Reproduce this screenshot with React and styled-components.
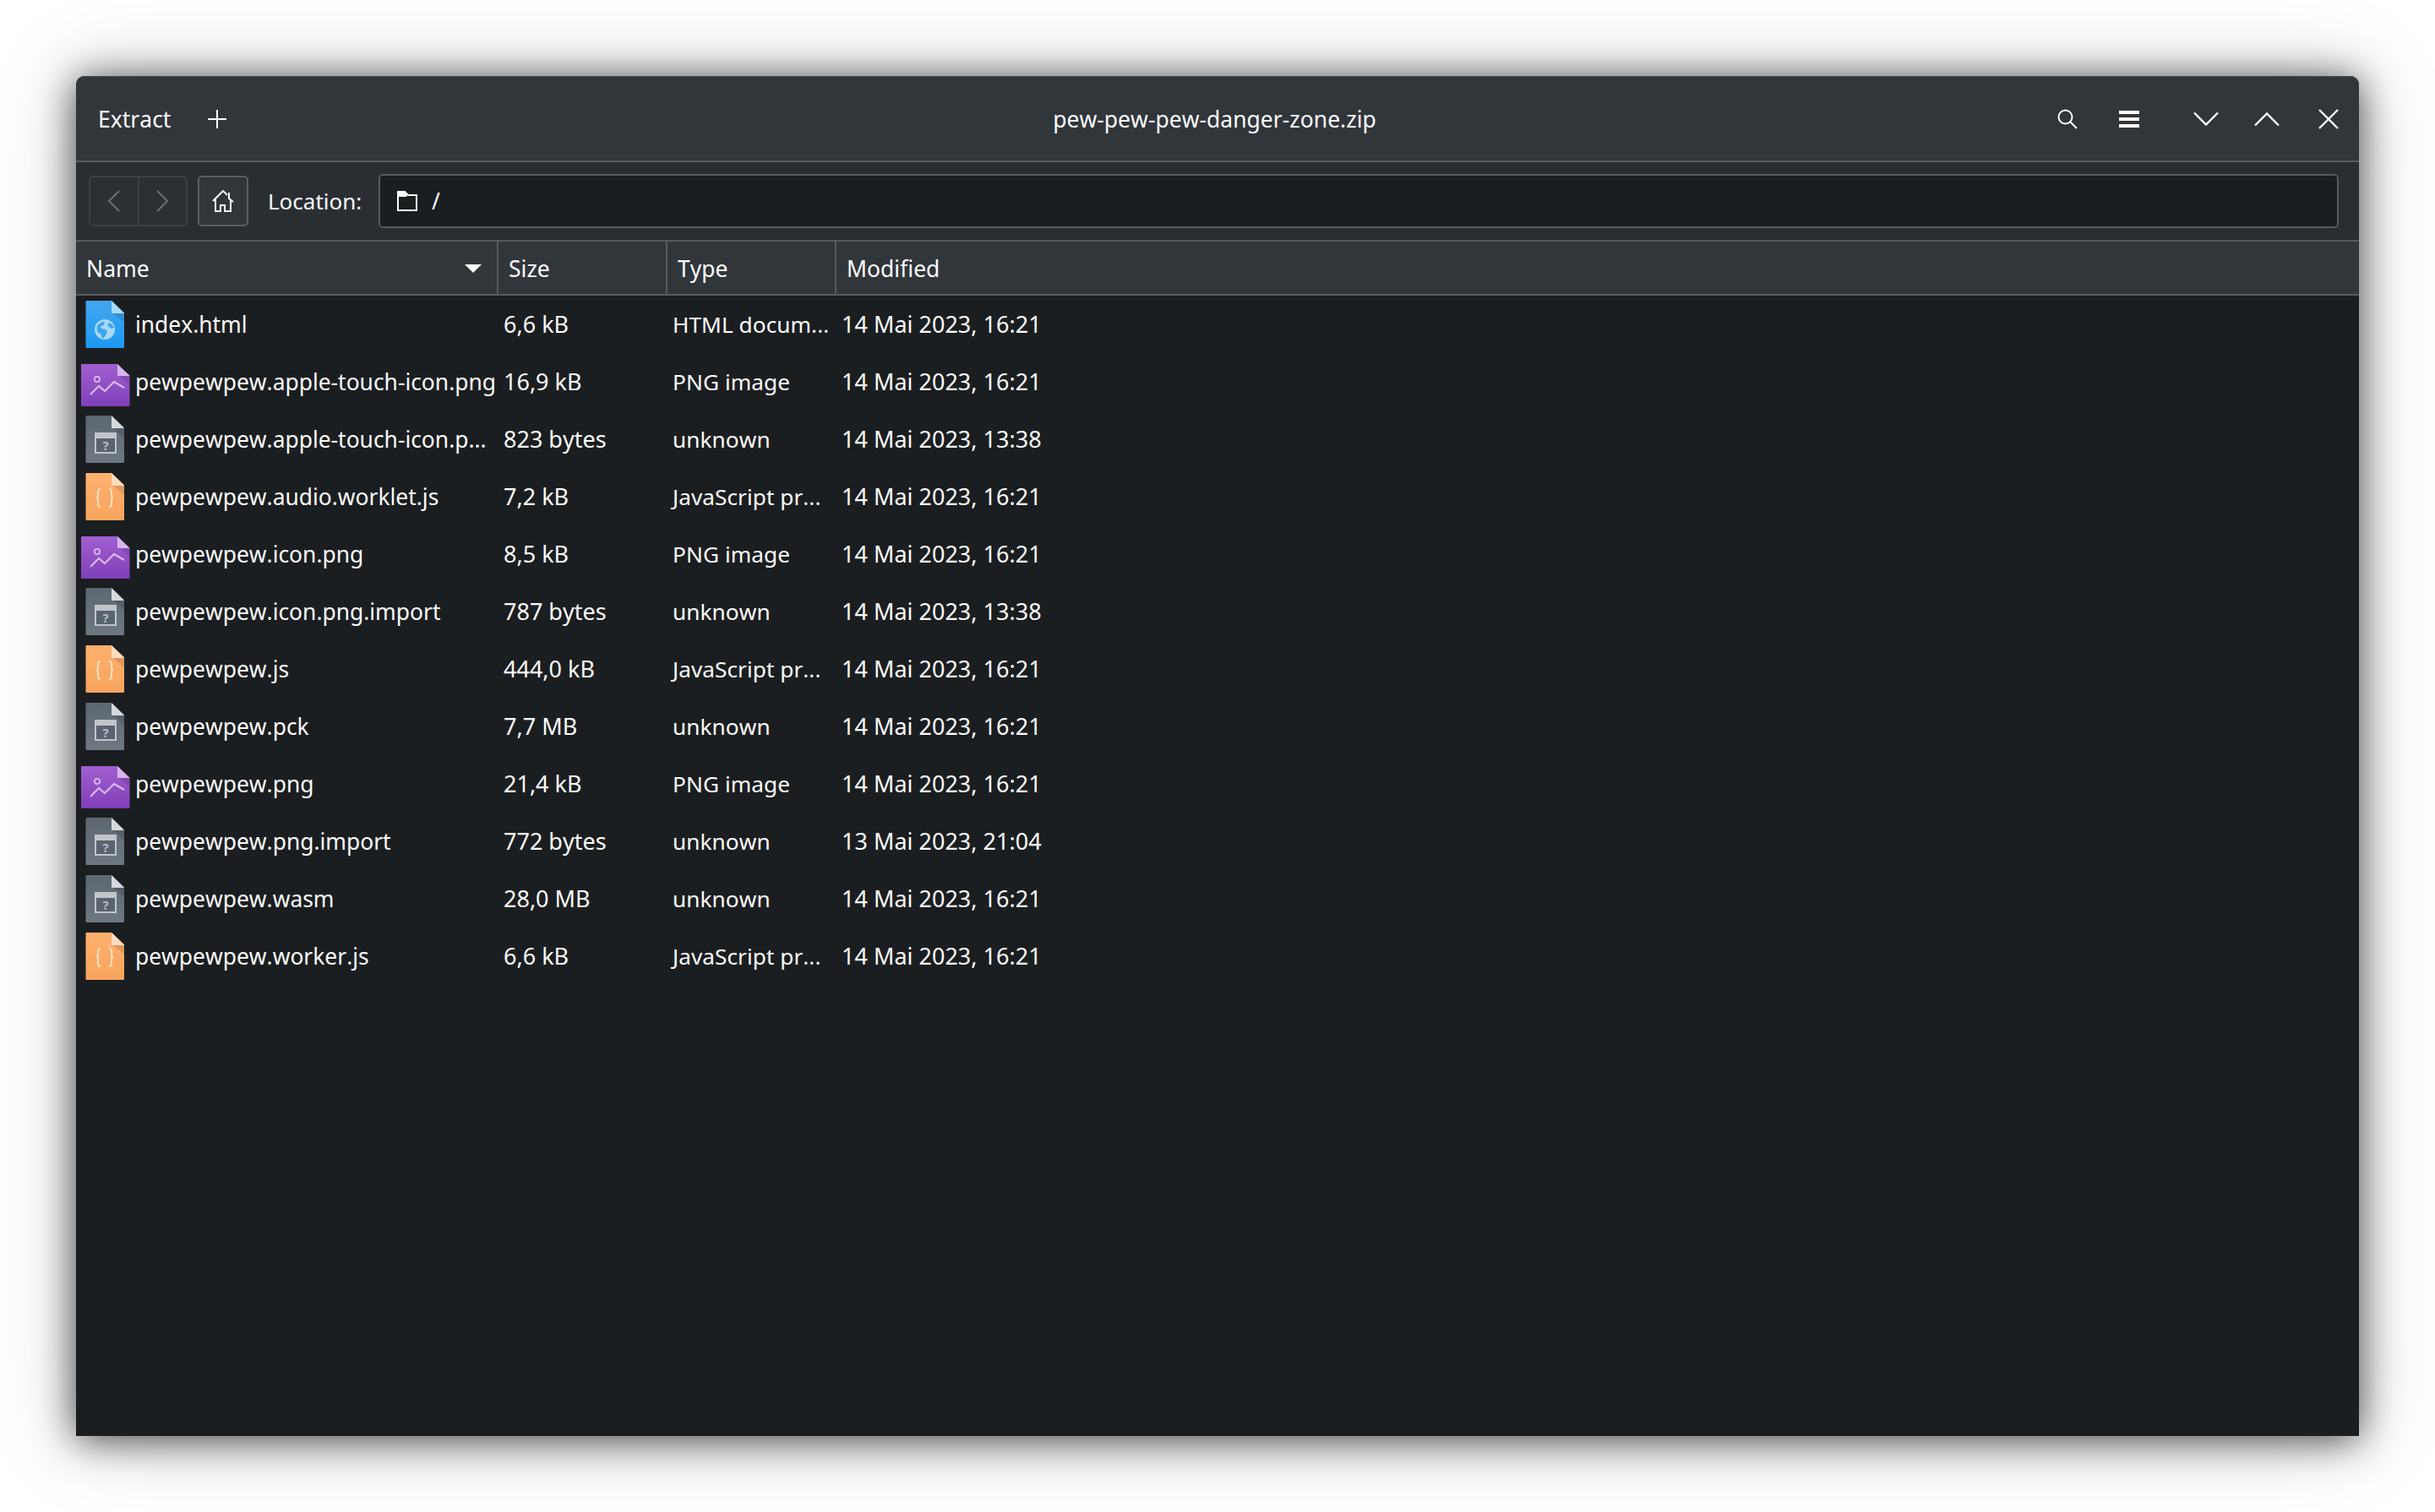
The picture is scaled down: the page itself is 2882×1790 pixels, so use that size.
import React from "react";
import styled, { createGlobalStyle } from "styled-components";

const Global = createGlobalStyle`
  html, body { margin: 0; padding: 0; background: #fff; }
  body { font-family: "Noto Sans", sans-serif; color: #fcfcfc; }
`;

const Page = styled.div`
  width: 2882px;
  height: 1790px;
  padding: 90px;
  box-sizing: border-box;
  overflow: hidden;
`;
const Win = styled.div`
  width: 2702px;
  height: 1610px;
  display: flex;
  flex-direction: column;
  background: #1b1e20;
  border-radius: 10px 10px 0 0;
  box-shadow: 0 4px 48px 0 rgba(0,0,0,.72), 0 0 110px 6px rgba(0,0,0,.13);
  font-size: 26.5px;
  line-height: 36px;
  font-kerning: none;
`;
const TitleBar = styled.header`
  height: 102px;
  flex: none;
  display: flex;
  align-items: center;
  padding: 0 23px 0 26px;
  background: #31363b;
  border-top: 1px solid #454a50;
  border-bottom: 2px solid #565a5e;
  border-radius: 10px 10px 0 0;
  box-sizing: border-box;
`;
const TitleLeft = styled.div`
  flex: 1;
  display: flex;
  align-items: center;
  gap: 43px;
  span { padding-top: 1px; }
`;
const Title = styled.div`
  flex: none;
  text-align: center;
  margin-right: 10px;
  padding-top: 1px;
`;
const TitleRight = styled.div`
  flex: 1;
  display: flex;
  justify-content: flex-end;
  align-items: center;
`;
const Glyph = styled.span`
  display: inline-flex;
  width: ${p => p.$w || 24}px;
  margin-left: ${p => p.$ml || 0}px;
  justify-content: center;
  align-items: center;
`;
const Toolbar = styled.div`
  height: 94px;
  flex: none;
  display: flex;
  align-items: center;
  padding: 0 24px 0 15px;
  background: #2a2e32;
  border-bottom: 2px solid #565a5e;
  box-sizing: border-box;
`;
const NavGroup = styled.div`
  display: flex;
  width: 117px;
  height: 60px;
  border: 2px solid #3d4145;
  border-radius: 5px;
  box-sizing: border-box;
  background: #2c3034;
`;
const NavBtn = styled.div`
  flex: 1;
  display: flex;
  align-items: center;
  justify-content: center;
  & + & { border-left: 2px solid #3d4145; }
`;
const HomeBtn = styled.div`
  margin-left: 12px;
  width: 60px;
  height: 60px;
  display: flex;
  align-items: center;
  justify-content: center;
  border: 2px solid #5a5e62;
  border-radius: 5px;
  box-sizing: border-box;
  background: #31363b;
`;
const LocLabel = styled.div`
  margin-left: 23px;
  width: 131px;
  font-size: 26px;
`;
const LocField = styled.div`
  flex: 1;
  height: 64px;
  display: flex;
  align-items: center;
  gap: 17px;
  padding: 0 20px;
  background: #1b1e20;
  border: 2px solid #565a5e;
  border-radius: 5px;
  box-sizing: border-box;
`;
const HeadRow = styled.div`
  height: 64px;
  flex: none;
  display: grid;
  grid-template-columns: 500px 200px 200px 1fr;
  background: #31363b;
  border-bottom: 2px solid #565a5e;
  box-sizing: border-box;
`;
const HeadCell = styled.div`
  display: flex;
  align-items: center;
  justify-content: space-between;
  padding: 1px 18px 0 12px;
  border-right: ${p => (p.$last ? "none" : "2px solid #565a5e")};
  box-sizing: border-box;
`;
const Rows = styled.div`
  flex: 1;
  padding-top: 1px;
`;
const Row = styled.div`
  height: 68px;
  display: grid;
  grid-template-columns: 500px 200px 200px 1fr;
  align-items: center;
`;
const NameCell = styled.div`
  display: flex;
  align-items: center;
  padding-left: 2px;
  gap: 4px;
  white-space: nowrap;
  font-size: 26.4px;
  svg { flex: none; }
  span { margin-top: -2px; }
`;
const Cell = styled.div`
  padding: 0 0 2px 6px;
  white-space: nowrap;
  font-size: ${p => p.$size || 27}px;
`;

const Plus = () => (
  <svg width="24" height="24" viewBox="0 0 24 24"><path d="M12 1v22M1 12h22" stroke="#fcfcfc" strokeWidth="2" fill="none" /></svg>
);
const Search = () => (
  <svg width="24" height="24" viewBox="0 0 24 24" fill="none" stroke="#fcfcfc" strokeWidth="2"><circle cx="9.500" cy="9.500" r="8" /><path d="M15 15l8 8" /></svg>
);
const Burger = () => (
  <svg width="24" height="20" viewBox="0 0 24 20" fill="#fcfcfc"><rect width="24" height="4" /><rect y="8" width="24" height="4" /><rect y="16" width="24" height="4" /></svg>
);
const Chevron = ({ up }) => (
  <svg width="30" height="18" viewBox="0 0 30 18" fill="none" stroke="#fcfcfc" strokeWidth="2.4">
    <path d={up ? "M1 16.500L15 2.500l14 14" : "M1 1.500L15 15.500 29 1.500"} />
  </svg>
);
const Close = () => (
  <svg width="26" height="26" viewBox="0 0 26 26" fill="none" stroke="#fcfcfc" strokeWidth="2.4"><path d="M2 2l22 22M24 2L2 24" /></svg>
);
const Nav = ({ right }) => (
  <svg width="16" height="26" viewBox="0 0 16 26" fill="none" stroke="#6b6f73" strokeWidth="2"><path d={right ? "M2 1l12 12L2 25" : "M14 1L2 13l12 12"} /></svg>
);
const Home = () => (
  <svg width="26" height="26" viewBox="0 0 26 26" fill="none" stroke="#fcfcfc" strokeWidth="2">
    <path d="M1 13L13 1l5 5M20 3v7l5 4M4 11v14h6v-7h5v7h7V11" />
  </svg>
);
const Folder = () => (
  <svg width="24" height="24" viewBox="0 0 24 24" fill="none" stroke="#fcfcfc" strokeWidth="2">
    <path d="M1 1h8l4 4h10v18H1z" />
    <path d="M1 1h7l4 4-1 2H1z" fill="#fcfcfc" stroke="none" />
  </svg>
);
const Sort = () => (
  <svg width="20" height="10" viewBox="0 0 20 10" fill="#fcfcfc"><path d="M0 0h20L10 10z" /></svg>
);

const Doc = ({ from, to, fold, id }) => (
  <>
    <defs>
      <linearGradient id={id} x1="0" y1="0" x2="0" y2="1">
        <stop offset="0" stopColor={from} /><stop offset="1" stopColor={to} />
      </linearGradient>
    </defs>
    <path d="M9.500 4a1 1 0 0 1 1-1H40l15 14v41a1 1 0 0 1-1 1H10.500a1 1 0 0 1-1-1z" fill={`url(#${id})`} />
    <path d="M40 3l15 15H41a1 1 0 0 1-1-1z" fill={fold} />
    <path d="M42 18l13 11V18z" fill="#000" opacity=".12" />
  </>
);

const HtmlIcon = () => (
  <svg width="64" height="64" viewBox="0 0 64 64">
    <Doc id="gh" from="#42a6ee" to="#1d99f3" fold="#a9d9f9" />
    <circle cx="32" cy="37" r="12" fill="#a9d8f9" />
    <path d="M23 33c2-3 5-5 9-5l-1 4-4 1 1 3 5 1 2 3-2 4-3 4c-2-2-2-4-3-6l-4-2zM37 29c2 1 5 3 6 6l-3 1-3-2-2-3z" fill="#3aa5f0" />
  </svg>
);
const ImageIcon = () => (
  <svg width="64" height="64" viewBox="0 0 64 64">
    <defs>
      <linearGradient id="gi" x1="0" y1="0" x2="0" y2="1"><stop offset="0" stopColor="#a15fd0" /><stop offset="1" stopColor="#7f3fb8" /></linearGradient>
    </defs>
    <path d="M4 11a1 1 0 0 1 1-1h42l14.500 13.500V59a1 1 0 0 1-1 1H5a1 1 0 0 1-1-1z" fill="url(#gi)" />
    <path d="M47 10l14.500 14H48a1 1 0 0 1-1-1z" fill="#d7b6ea" />
    <path d="M49 24l12.500 10V24z" fill="#000" opacity=".12" />
    <circle cx="23" cy="28" r="3.200" fill="none" stroke="#d9b8ec" strokeWidth="1.800" />
    <path d="M15 46l10-10 7 6 11-11 12 7" fill="none" stroke="#d9b8ec" strokeWidth="2.200" />
  </svg>
);
const UnknownIcon = () => (
  <svg width="64" height="64" viewBox="0 0 64 64">
    <Doc id="gu" from="#5d6772" to="#6e7882" fold="#d6d9dc" />
    <rect x="21" y="24" width="24" height="23" fill="#5a6470" stroke="#c1c5c9" strokeWidth="2" />
    <rect x="20" y="23" width="26" height="7" fill="#c1c5c9" />
    <text x="33" y="44" fontSize="15" fontWeight="700" textAnchor="middle" fill="#b8bcc1" fontFamily="Noto Sans">?</text>
  </svg>
);
const JsIcon = () => (
  <svg width="64" height="64" viewBox="0 0 64 64">
    <Doc id="gj" from="#fdb06e" to="#f9a55e" fold="#fedcc0" />
    <path d="M27 22c-2 0-3 1-3 3v4c0 2-1 3-2 3 1 0 2 1 2 3v5c0 2 1 3 3 3M37 22c2 0 3 1 3 3v4c0 2 1 3 2 3-1 0-2 1-2 3v5c0 2-1 3-3 3" fill="none" stroke="#ffe0c4" strokeWidth="2" />
  </svg>
);

const icons = { html: HtmlIcon, png: ImageIcon, unk: UnknownIcon, js: JsIcon };

const files = [
  ["html", "index.html", "6,6 kB", "HTML docum...", "14 Mai 2023, 16:21"],
  ["png", "pewpewpew.apple-touch-icon.png", "16,9 kB", "PNG image", "14 Mai 2023, 16:21"],
  ["unk", "pewpewpew.apple-touch-icon.p...", "823 bytes", "unknown", "14 Mai 2023, 13:38"],
  ["js", "pewpewpew.audio.worklet.js", "7,2 kB", "JavaScript pr...", "14 Mai 2023, 16:21"],
  ["png", "pewpewpew.icon.png", "8,5 kB", "PNG image", "14 Mai 2023, 16:21"],
  ["unk", "pewpewpew.icon.png.import", "787 bytes", "unknown", "14 Mai 2023, 13:38"],
  ["js", "pewpewpew.js", "444,0 kB", "JavaScript pr...", "14 Mai 2023, 16:21"],
  ["unk", "pewpewpew.pck", "7,7 MB", "unknown", "14 Mai 2023, 16:21"],
  ["png", "pewpewpew.png", "21,4 kB", "PNG image", "14 Mai 2023, 16:21"],
  ["unk", "pewpewpew.png.import", "772 bytes", "unknown", "13 Mai 2023, 21:04"],
  ["unk", "pewpewpew.wasm", "28,0 MB", "unknown", "14 Mai 2023, 16:21"],
  ["js", "pewpewpew.worker.js", "6,6 kB", "JavaScript pr...", "14 Mai 2023, 16:21"],
];

export default function App() {
  return (
    <Page>
      <Global />
      <Win>
        <TitleBar>
          <TitleLeft><span>Extract</span><Plus /></TitleLeft>
          <Title>pew-pew-pew-danger-zone.zip</Title>
          <TitleRight>
            <Glyph><Search /></Glyph>
            <Glyph $ml={49}><Burger /></Glyph>
            <Glyph $w={30} $ml={64}><Chevron /></Glyph>
            <Glyph $w={30} $ml={42}><Chevron up /></Glyph>
            <Glyph $w={26} $ml={45}><Close /></Glyph>
          </TitleRight>
        </TitleBar>
        <Toolbar>
          <NavGroup><NavBtn><Nav /></NavBtn><NavBtn><Nav right /></NavBtn></NavGroup>
          <HomeBtn><Home /></HomeBtn>
          <LocLabel>Location:</LocLabel>
          <LocField><Folder /><span>/</span></LocField>
        </Toolbar>
        <HeadRow>
          <HeadCell><span>Name</span><Sort /></HeadCell>
          <HeadCell>Size</HeadCell>
          <HeadCell>Type</HeadCell>
          <HeadCell $last>Modified</HeadCell>
        </HeadRow>
        <Rows>
          {files.map(([kind, name, size, type, date]) => {
            const Icon = icons[kind];
            return (
              <Row key={name}>
                <NameCell><Icon /><span>{name}</span></NameCell>
                <Cell>{size}</Cell>
                <Cell $size={26.3}>{type}</Cell>
                <Cell>{date}</Cell>
              </Row>
            );
          })}
        </Rows>
      </Win>
    </Page>
  );
}
